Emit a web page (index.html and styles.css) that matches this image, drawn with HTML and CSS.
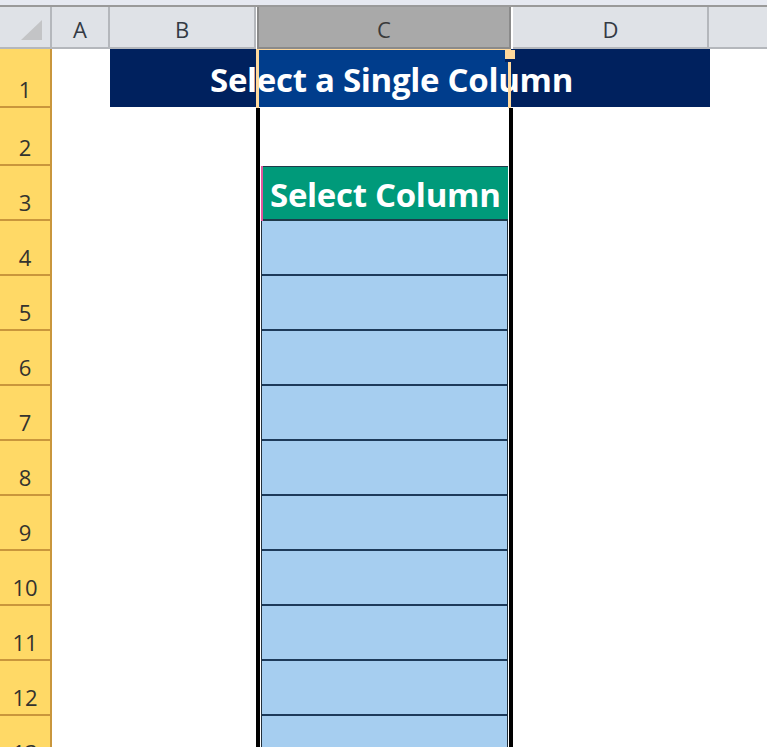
FILE: index.html
```html
<!DOCTYPE html>
<html lang="en">
<head>
<meta charset="utf-8">
<title>Select a Single Column</title>
<link rel="stylesheet" href="styles.css">
</head>
<body>
<div class="ribbon-edge"></div>
<div class="sheet">
  <!-- column headers -->
  <div class="corner"><span class="corner-tri"></span></div>
  <div class="colhead">A</div>
  <div class="colhead">B</div>
  <div class="colhead colhead-sel">C</div>
  <div class="colhead">D</div>
  <div class="colhead colhead-last"></div>

  <!-- row 1 -->
  <div class="rowhead">1</div>
  <div class="cell"></div>
  <div class="title-band">
    <span class="title-text">Select a Single Column</span>
    <span class="sel-frame"><span class="sel-handle"></span></span>
  </div>
  <div class="cell"></div>

  <!-- row 2 -->
  <div class="rowhead">2</div>
  <div class="cell"></div><div class="cell"></div>
  <div class="ccol"><div class="c-white"></div></div>
  <div class="cell"></div><div class="cell"></div>

  <!-- row 3 -->
  <div class="rowhead">3</div>
  <div class="cell"></div><div class="cell"></div>
  <div class="ccol"><div class="c-head">Select Column</div></div>
  <div class="cell"></div><div class="cell"></div>

  <div class="rowhead">4</div>
  <div class="cell"></div><div class="cell"></div>
  <div class="ccol"><div class="c-blue"></div></div>
  <div class="cell"></div><div class="cell"></div>

  <div class="rowhead">5</div>
  <div class="cell"></div><div class="cell"></div>
  <div class="ccol"><div class="c-blue"></div></div>
  <div class="cell"></div><div class="cell"></div>

  <div class="rowhead">6</div>
  <div class="cell"></div><div class="cell"></div>
  <div class="ccol"><div class="c-blue"></div></div>
  <div class="cell"></div><div class="cell"></div>

  <div class="rowhead">7</div>
  <div class="cell"></div><div class="cell"></div>
  <div class="ccol"><div class="c-blue"></div></div>
  <div class="cell"></div><div class="cell"></div>

  <div class="rowhead">8</div>
  <div class="cell"></div><div class="cell"></div>
  <div class="ccol"><div class="c-blue"></div></div>
  <div class="cell"></div><div class="cell"></div>

  <div class="rowhead">9</div>
  <div class="cell"></div><div class="cell"></div>
  <div class="ccol"><div class="c-blue"></div></div>
  <div class="cell"></div><div class="cell"></div>

  <div class="rowhead">10</div>
  <div class="cell"></div><div class="cell"></div>
  <div class="ccol"><div class="c-blue"></div></div>
  <div class="cell"></div><div class="cell"></div>

  <div class="rowhead">11</div>
  <div class="cell"></div><div class="cell"></div>
  <div class="ccol"><div class="c-blue"></div></div>
  <div class="cell"></div><div class="cell"></div>

  <div class="rowhead">12</div>
  <div class="cell"></div><div class="cell"></div>
  <div class="ccol"><div class="c-blue"></div></div>
  <div class="cell"></div><div class="cell"></div>

  <div class="rowhead">13</div>
  <div class="cell"></div><div class="cell"></div>
  <div class="ccol"><div class="c-blue"></div></div>
  <div class="cell"></div><div class="cell"></div>
</div>
</body>
</html>
```
FILE: styles.css
```css
html, body {
  margin: 0;
  padding: 0;
  background: #ffffff;
  overflow: hidden;
  height: 747px;
}
body {
  font-family: "Open Sans", "Liberation Sans", sans-serif;
}
.ribbon-edge {
  height: 5px;
  background: #e6e9f1;
  border-bottom: 2px solid #9a9a9a;
}
.sheet {
  display: grid;
  grid-template-columns: 52px 58px 146px 257px 197px 1fr;
  grid-template-rows: 42px 59px 58px repeat(11, 55px);
}
.corner {
  background: #dfe2e7;
  border-right: 2px solid #b4b7bc;
  border-bottom: 2px solid #b4b7bc;
  box-sizing: border-box;
  display: flex;
  justify-content: flex-end;
  align-items: flex-end;
  padding: 0 8px 7px 0;
}
.corner-tri {
  width: 0;
  height: 0;
  border-left: 21px solid transparent;
  border-bottom: 20px solid #c3c4c6;
}
.colhead {
  background: #dfe2e7;
  border-right: 2px solid #b4b7bc;
  border-bottom: 2px solid #b4b7bc;
  box-sizing: border-box;
  display: flex;
  align-items: center;
  justify-content: center;
  font-family: "Open Sans", "Liberation Sans", sans-serif;
  font-size: 22px;
  color: #333a44;
  padding-top: 3px;
}
.colhead-sel {
  background: #a9a9a9;
  border-left: 2px solid #8a8a8a;
  border-right: 2px solid #8a8a8a;
  border-bottom: 2px solid #8a8a8a;
  color: #3a3a3a;
  margin-left: 1px;
  margin-right: 2px;
}
.colhead-last {
  border-left: 2px solid #b4b7bc;
  border-right: none;
  margin-left: -3px;
}
.rowhead {
  background: #ffd966;
  border-right: 2px solid #c9963c;
  border-bottom: 2px solid #c9963c;
  box-sizing: border-box;
  display: flex;
  align-items: flex-end;
  justify-content: center;
  padding-bottom: 5px;
  font-family: "Open Sans", "Liberation Sans", sans-serif;
  font-size: 22px;
  line-height: 24px;
  color: #33332f;
}
.cell {
  background: #ffffff;
}
.title-band {
  grid-column: 3 / 6;
  position: relative;
  margin-bottom: 1px;
  background: linear-gradient(to right,
    #00215e 0, #00215e 146px,
    #003d8c 146px, #003d8c 400px,
    #00215e 400px);
  display: flex;
  align-items: center;
  padding-left: 100px;
}
.title-text {
  color: #ffffff;
  font-family: "Open Sans", "Liberation Sans", sans-serif;
  font-weight: 700;
  font-size: 33px;
  letter-spacing: -0.3px;
  position: relative;
  z-index: 1;
  padding-top: 2px;
}
.sel-frame {
  position: absolute;
  left: 146px;
  top: 0;
  width: 255px;
  bottom: -1px;
  box-sizing: border-box;
  border-left: 3px solid #ffd99c;
  border-right: 3px solid #ffd99c;
  border-top: 1px solid #ffd99c;
  z-index: 2;
}
.sel-handle {
  position: absolute;
  right: -7px;
  top: 0;
  width: 10px;
  height: 9px;
  background: #ffd99c;
  border-bottom: 3px solid #00215e;
}
.ccol {
  background: #000000;
  padding: 0 4px 0 4px;
  display: flex;
}
.c-white {
  flex: 1;
  background: #ffffff;
}
.c-head {
  flex: 1;
  background: #009a7a;
  border-left: 1px solid #ffffff;
  border-right: 1px solid #ffffff;
  box-shadow: inset 2px 0 #e0579e, inset 0 -2px #1e3a4a, inset 0 1px #1e3a4a;
  color: #ffffff;
  font-family: "Open Sans", "Liberation Sans", sans-serif;
  font-weight: 700;
  font-size: 33px;
  letter-spacing: -0.3px;
  display: flex;
  align-items: center;
  padding-left: 9px;
  padding-top: 2px;
}
.c-blue {
  flex: 1;
  background: #a6cef0;
  border-left: 1px solid #ffffff;
  border-right: 1px solid #ffffff;
  box-shadow: inset 1px 0 #22303c, inset -1px 0 #22303c, inset 0 -2px #1d3a5a;
}
```
